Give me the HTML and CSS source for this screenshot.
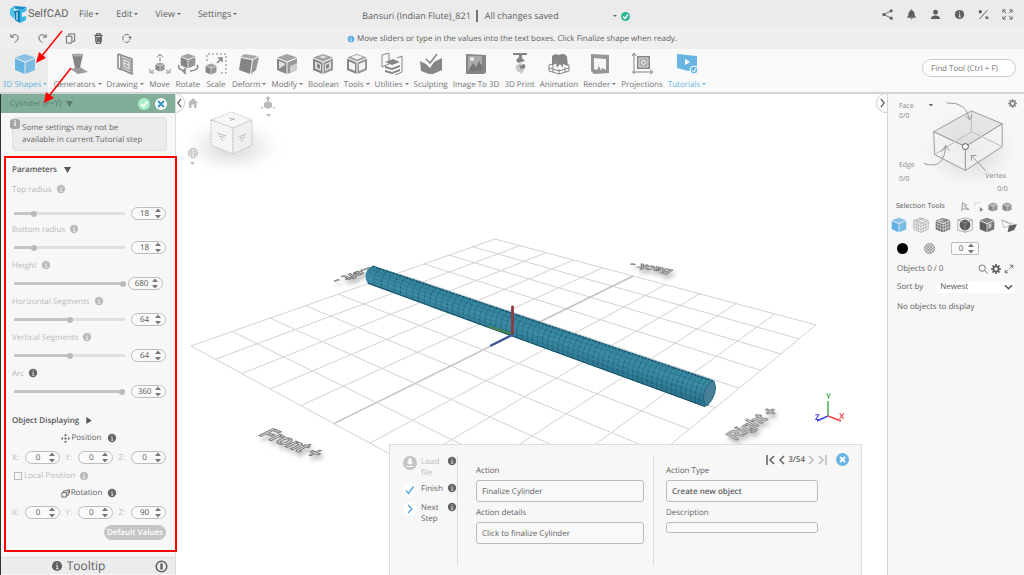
FILE: index.html
```html
<!DOCTYPE html>
<html lang="en">
<head>
<meta charset="utf-8">
<title>SelfCAD</title>
<link rel="stylesheet" href="styles.css">
</head>
<body>
<svg class="defs" aria-hidden="true">
  <symbol id="cube" viewBox="0 0 22 22"><path d="M11 1 21 4.500 11 8.500 1 4.500Z" opacity=".75"/><path d="M1 5.500 10.500 9.500V21L1 17Z"/><path d="M11.500 9.500 21 5.500V17L11.500 21Z" opacity=".85"/></symbol>
  <symbol id="info" viewBox="0 0 10 10"><circle cx="5" cy="5" r="4.200"/><path d="M5 2.300V3.300M4.300 4.500H5.200V7.300M4.200 7.300H6.200" stroke="#fff" stroke-width=".7" fill="none"/></symbol>
  <symbol id="spin" viewBox="0 0 6 11"><path d="M0 4 3 .5 6 4ZM0 7H6L3 10.500Z"/></symbol>
  <symbol id="down" viewBox="0 0 8 8"><path d="M0 1H8L4 8Z"/></symbol>
  <symbol id="chev" viewBox="0 0 8 12"><path d="M6 1 2 6 6 11" fill="none" stroke="currentColor" stroke-width="1.500"/></symbol>
  <symbol id="gear" viewBox="0 0 12 12"><path d="M6 0V12M0 6H12M1.800 1.800 10.200 10.200M10.200 1.800 1.800 10.200" stroke="currentColor" stroke-width="2"/><circle cx="6" cy="6" r="4.200"/><circle cx="6" cy="6" r="2" fill="#f7f7f7"/></symbol>
</svg>

<header class="top">
  <a class="brand" href="#"><svg width="19" height="19" viewBox="0 0 19 19"><path d="M1 4 5 1V14L1 10Z" fill="#4fc3e8"/><path d="M5 1 18 2 13 5 6 4Z" fill="#1690c8"/><path d="M5 6 11 5V18L6 15Z" fill="#087eb5"/><path d="M11 5 18 3 17 6 13 8V12L17 11V15L11 18Z" fill="#35b9e4"/><path d="M8 7V15" stroke="#fff" stroke-width="1"/></svg>SelfCAD</a>
  <nav class="menu"><button class="dd">File</button><button class="dd">Edit</button><button class="dd">View</button><button class="dd">Settings</button></nav>
  <div class="doc"><span class="doc-name">Bansuri (Indian Flute)_821</span><span>All changes saved</span></div>
  <div class="doc-state"><button class="dd" aria-label="Versions"></button><svg width="9" height="9" viewBox="0 0 9 9"><circle cx="4.500" cy="4.500" r="4.500" fill="#2bb795"/><path d="m2 4.500 2 2 3-4" fill="none" stroke="#fff" stroke-width="1.300"/></svg></div>
  <div class="top-icons">
    <button aria-label="Share"><svg viewBox="0 0 12 12"><path d="M10 2 2 6 10 10" fill="none" stroke="currentColor"/><circle cx="10" cy="2" r="1.700"/><circle cx="2" cy="6" r="1.700"/><circle cx="10" cy="10" r="1.700"/></svg></button>
    <button aria-label="Notifications"><svg viewBox="0 0 12 12"><path d="M6 0 7 1.500Q9.500 2.500 9.500 7L11 9.500H1L2.500 7Q2.500 2.500 5 1.500ZM4.500 10H7.500L6 11.500Z"/></svg></button>
    <button aria-label="Account"><svg viewBox="0 0 12 12"><circle cx="6" cy="3.500" r="2.700"/><path d="M1 11Q1 7 6 7T11 11Z"/></svg></button>
    <button aria-label="About"><svg viewBox="0 0 10 10"><use href="#info"/></svg></button>
    <button aria-label="Tools"><svg viewBox="0 0 12 12"><path d="M1.500 11 10.500 1" stroke="currentColor"/><circle cx="2.500" cy="3" r="1.800"/><path d="M8 8 11 8.500 11.500 11 8.500 10.500Z"/></svg></button>
    <button aria-label="Full screen"><svg viewBox="0 0 12 12"><path d="M1 4V1H4M8 1H11V4M11 8V11H8M4 11H1V8M1 1 4.500 4.500M11 1 7.500 4.500M11 11 7.500 7.500M1 11 4.500 7.500" fill="none" stroke="currentColor"/></svg></button>
  </div>
</header>

<div class="sub">
  <div class="history">
    <button aria-label="Undo"><svg viewBox="0 0 12 12"><path d="M2 1.500V4.500H5.500M2.500 4Q7-.5 10 4 11 8 6 10.500"/></svg></button>
    <button aria-label="Redo"><svg viewBox="0 0 12 12"><path d="M10 1.500V4.500H6.500M9.500 4Q5-.5 2 4 1 8 6 10.500"/></svg></button>
    <button aria-label="Copy"><svg viewBox="0 0 12 12"><path d="M1.500 3.500H7.500V11H1.500ZM4 3V1H10.500V9H8"/></svg></button>
    <button aria-label="Delete"><svg viewBox="0 0 12 12"><path d="M1.500 2.500H10.500M4 2V.8H8V2M3 3V9L4 11.500H8L9 9V3M4.700 4V10M6.200 4V10M7.700 4V10" stroke-width="1.300"/></svg></button>
    <button aria-label="Refresh"><svg viewBox="0 0 12 12"><path d="M8.500 2Q5 .5 2.500 3.500 1 7 3.500 9.500M5 10.500Q9 10.500 10 7V4M8.200 5.500 10 3.500 11.500 5.500" stroke-dasharray="5 1"/></svg></button>
  </div>
  <p class="hint"><svg class="blue" width="8" height="8"><use href="#info"/></svg>Move sliders or type in the values into the text boxes. Click Finalize shape when ready.</p>
</div>

<div class="ribbon">
  <button class="tool on"><svg viewBox="0 0 22 22"><use href="#cube"/></svg><span class="dd">3D Shapes</span></button>
  <button class="tool"><svg viewBox="0 0 22 22"><path d="M6 1H17L14 15H9Z"/><ellipse cx="11.500" cy="2" rx="5.500" ry="1.500" fill="#aaa"/><path d="M4 16 14 14 22 19 12 21Z" opacity=".8"/></svg><span class="dd">Generators</span></button>
  <button class="tool"><svg viewBox="0 0 22 22"><path d="M4 1V15L7 17M4 1 18 6V21L7 16V3" fill="none" stroke="currentColor" stroke-width="1.500"/><path d="M8 4 17 7V19L8 15Z" opacity=".7"/><path d="M10 7 15 9V16L10 13ZM10 10 15 12" fill="none" stroke="#eee"/></svg><span class="dd">Drawing</span></button>
  <button class="tool"><svg viewBox="0 0 22 22"><use href="#cube" x="6" y="9" width="10" height="10"/><path d="M11 8V1M8 4 11 1 14 4M5 17 1 20M1 16V20H5M17 17 21 20M21 16V20H17" fill="none" stroke="currentColor" stroke-dasharray="4 1"/></svg><span>Move</span></button>
  <button class="tool"><svg viewBox="0 0 22 22"><use href="#cube" x="3" y="0" width="16" height="16"/><path d="M2 12Q0 17 9 18M20 12Q23 17 13 18M9 15 6 18 9 21" fill="none" stroke="currentColor" stroke-width="1.500"/></svg><span>Rotate</span></button>
  <button class="tool"><svg viewBox="0 0 22 22"><use href="#cube" x="0" y="10" width="12" height="12"/><path d="M2 8V1H21V20H14" fill="none" stroke="currentColor" stroke-dasharray="2 2"/><path d="M12 10 17 5M13 5H17V9" fill="none" stroke="currentColor" stroke-width="1.500"/></svg><span>Scale</span></button>
  <button class="tool"><svg viewBox="0 0 22 22"><path d="M6 1 20 3 15 6 3 4Z" opacity=".7"/><path d="M3 5 14 7 12 21 1 17Z"/><path d="M15 7 21 4 18 17 13 21Z" opacity=".85"/></svg><span class="dd">Deform</span></button>
  <button class="tool"><svg viewBox="0 0 22 22"><use href="#cube"/><path d="M3 8 9 10.500V18L3 15.500Z" fill="#ddd"/><path d="M3 16 9 12V18Z"/><path d="M14 13 21 10V17L14 20Z" fill="#ccc"/></svg><span class="dd">Modify</span></button>
  <button class="tool"><svg viewBox="0 0 22 22"><use href="#cube"/><path d="M3 8.500 9 11V18L3 15.500ZM13 11 19 8.500V15.500L13 18ZM7 4 11 2.500 15 4 11 5.500Z" fill="#ddd"/><path d="M5 10.500 8 12V16L5 14.500ZM14 12 17 10.500V14.500L14 16Z"/></svg><span>Boolean</span></button>
  <button class="tool"><svg viewBox="0 0 22 22"><use href="#cube"/><path d="M3 8.500 9 11V18L3 15.500ZM13 11 19 8.500V15.500L13 18ZM5 4 11 2 17 4 11 6.500Z" fill="#f4f4f4"/></svg><span class="dd">Tools</span></button>
  <button class="tool"><svg viewBox="0 0 22 22"><path d="M1 2 8 0V11L1 14ZM16 5 21 3V19L14 22" fill="none" stroke="currentColor"/><path d="m4 9 8-3 7 3-8 3ZM4 13l7 2 8-3v2l-8 3-7-2ZM4 17l7 2 8-3v2l-8 3-7-2Z"/></svg><span class="dd">Utilities</span></button>
  <button class="tool"><svg viewBox="0 0 22 22"><path d="M0 8 6 11 10 15 14 9 22 5V17L13 21H9L1 18Z"/><path d="M17 1 10 10 6 6" fill="none" stroke="currentColor" stroke-width="1.500"/></svg><span>Sculpting</span></button>
  <button class="tool"><svg viewBox="0 0 22 22"><path d="M1 1 21 2V20L18 21H1Z"/><path d="M3 3H17V18H3Z" fill="#aaa"/><path d="M3 18 8 10 11 14 14 8 17 13V18Z" fill="#777"/><circle cx="7" cy="6" r="2" fill="#eee"/></svg><span>Image To 3D</span></button>
  <button class="tool"><svg viewBox="0 0 22 22"><path d="M4 0H18V2H13V5L16 8 9 10 7 7 10 4V2H4Z"/><path d="M6 13 12 10 17 13 13 21 8 18Z" opacity=".4"/><path d="M10 13 16 11V15L12 16Z"/></svg><span>3D Print</span></button>
  <button class="tool"><svg viewBox="0 0 22 22"><path d="M4 3Q7 0 11 2 17-1 19 4L20 13 15 11V15L12 11 9 15 8 10 4 13Z"/><path d="M1 12 11 9 21 12V18L11 21 1 18ZM1 15 11 18 21 15M5 13V19M11 16V21M17 14V19" fill="none" stroke="currentColor"/></svg><span>Animation</span></button>
  <button class="tool"><svg viewBox="0 0 22 22"><path d="M2 1 20 2V20L5 21 2 18Z" opacity=".85"/><path d="M5 5 17 6V17L13 15 12 18 10 13 8 17 5 16Z" fill="#f5f5f5"/></svg><span class="dd">Render</span></button>
  <button class="tool"><svg viewBox="0 0 22 22"><path d="M3 21V1M1 3 3 0 5 3M1 19H21M19 17 22 19 19 21" fill="none" stroke="currentColor"/><path d="M6 3H19V16H6Z"/><path d="M8 5H17V14H8Z" fill="#aaa" stroke="#ddd"/><circle cx="12.500" cy="9.500" r="2" fill="none" stroke="#fff"/></svg><span>Projections</span></button>
  <button class="tool tut"><svg viewBox="0 0 22 22"><path d="M1 1 21 3V16L12 18 1 15Z"/><path d="M9 6V12L14 9Z" fill="#fff"/><circle cx="18" cy="17" r="4" stroke="#fff"/><path d="m16 17 2 2 2-4" fill="none" stroke="#fff"/></svg><span class="dd">Tutorials</span></button>
  <input class="find" type="text" aria-label="Find tool" placeholder="Find Tool (Ctrl + F)">
</div>

<main class="work">
  <aside class="left">
    <div class="shape-bar"><span>Cylinder (P+Y)</span><svg width="7" height="7" viewBox="0 0 8 8"><use href="#down"/></svg>
      <button class="round ok" aria-label="Finalize"><svg viewBox="0 0 12 12"><path d="m3 6 2.500 2.500L9.500 3.500" stroke="#fff"/></svg></button>
      <button class="round no" aria-label="Cancel"><svg viewBox="0 0 12 12"><path d="m3 3 6 6M9 3 3 9" stroke="#3c94d0"/></svg></button></div>
    <p class="note"><span class="note-mark">i</span>Some settings may not be available in current Tutorial step</p>
    <section class="params">
      <h2>Parameters <svg width="7" height="7" viewBox="0 0 8 8"><use href="#down"/></svg></h2>
      <div class="param first"><label for="p1">Top radius</label><svg class="i"><use href="#info"/></svg><div class="ctl"><input id="p1" type="range" value="16" style="--v:16%"><span class="num"><input aria-label="Top radius value" value="18"><svg><use href="#spin"/></svg></span></div></div>
      <div class="param"><label for="p2">Bottom radius</label><svg class="i"><use href="#info"/></svg><div class="ctl"><input id="p2" type="range" value="16" style="--v:16%"><span class="num"><input aria-label="Bottom radius value" value="18"><svg><use href="#spin"/></svg></span></div></div>
      <div class="param"><label for="p3">Height</label><svg class="i"><use href="#info"/></svg><div class="ctl tight"><input id="p3" type="range" value="100" style="--v:100%"><span class="num"><input aria-label="Height value" value="680"><svg><use href="#spin"/></svg></span></div></div>
      <div class="param"><label for="p4">Horizontal Segments</label><svg class="i"><use href="#info"/></svg><div class="ctl"><input id="p4" type="range" value="50" style="--v:50%"><span class="num"><input aria-label="Horizontal segments value" value="64"><svg><use href="#spin"/></svg></span></div></div>
      <div class="param"><label for="p5">Vertical Segments</label><svg class="i"><use href="#info"/></svg><div class="ctl"><input id="p5" type="range" value="50" style="--v:50%"><span class="num"><input aria-label="Vertical segments value" value="64"><svg><use href="#spin"/></svg></span></div></div>
      <div class="param"><label for="p6">Arc</label><svg class="i dark"><use href="#info"/></svg><div class="ctl"><input id="p6" type="range" value="100" style="--v:100%"><span class="num"><input aria-label="Arc value" value="360"><svg><use href="#spin"/></svg></span></div></div>
    </section>
    <section class="place">
      <h2>Object Displaying <svg width="6" height="7" viewBox="0 0 6 8"><path d="M0 0V8L6 4Z"/></svg></h2>
      <h3><svg viewBox="0 0 10 10"><path d="M5 0 7 2H3ZM5 10 3 8H7ZM0 5 2 3V7ZM10 5 8 3V7ZM4 4H6V6H4Z"/></svg>Position<svg class="i dark"><use href="#info"/></svg></h3>
      <div class="xyz"><label for="px">X:</label><span class="num"><input id="px" value="0"><svg><use href="#spin"/></svg></span><label for="py">Y:</label><span class="num"><input id="py" value="0"><svg><use href="#spin"/></svg></span><label for="pz">Z:</label><span class="num"><input id="pz" value="0"><svg><use href="#spin"/></svg></span></div>
      <div class="local"><input id="loc" type="checkbox"><label for="loc">Local Position</label><svg class="i"><use href="#info"/></svg></div>
      <h3><svg viewBox="0 0 10 10"><path d="M1 4H6V9H1ZM3 4V2H8V7H6M7 1H9.500V5" fill="none" stroke="currentColor"/></svg>Rotation<svg class="i dark"><use href="#info"/></svg></h3>
      <div class="xyz"><label for="rx">X:</label><span class="num"><input id="rx" value="0"><svg><use href="#spin"/></svg></span><label for="ry">Y:</label><span class="num"><input id="ry" value="0"><svg><use href="#spin"/></svg></span><label for="rz">Z:</label><span class="num"><input id="rz" value="90"><svg><use href="#spin"/></svg></span></div>
      <button class="default">Default Values</button>
    </section>
    <footer class="tip"><span class="tip-name"><svg width="12" height="12" viewBox="0 0 10 10"><use href="#info"/></svg>Tooltip</span><button aria-label="Pin tooltip"><svg width="13" height="13" viewBox="0 0 13 13"><circle cx="6.500" cy="6.500" r="5.300" fill="none" stroke="currentColor" stroke-width="1.500"/><path d="M5.300 3.500H7.700V9.500H5.300Z"/></svg></button></footer>
  </aside>

  <section class="view">
    <svg id="scene" viewBox="176 94 711 481" preserveAspectRatio="xMidYMid slice">
      <defs>
        <radialGradient id="shade"><stop offset="0" stop-color="#aaa" stop-opacity=".55"/><stop offset=".5" stop-color="#ccc" stop-opacity=".3"/><stop offset="1" stop-color="#fff" stop-opacity="0"/></radialGradient>
        <linearGradient id="skin" gradientUnits="userSpaceOnUse" x1="545" y1="322" x2="536" y2="350"><stop offset="0" stop-color="#2f7f99"/><stop offset=".45" stop-color="#3c8ba5"/><stop offset="1" stop-color="#28718b"/></linearGradient>
        <filter id="drop" x="-30%" y="-30%" width="160%" height="180%"><feDropShadow dx="2" dy="4" stdDeviation="2" flood-color="#888" flood-opacity=".6"/></filter>
      </defs>
      <g id="grid" fill="none"></g>
      <g class="floor" filter="url(#drop)">
        <text transform="matrix(.95 .4 -1.200 .6 258 435)">Front +</text>
        <text transform="matrix(.75 -.5 .9 .5 736 441)">Right +</text>
        <text class="far" transform="matrix(-1.050 -.2 .7 -.5 674 270)">Back -</text>
        <text class="far" transform="matrix(-1.200 .4 -.7 -.45 370 267)">Left -</text>
      </g>
      <g id="tube"></g>
      <g stroke-linecap="round" stroke-width="2.200" fill="none"><path d="M512 334 490 327" stroke="#4b8150"/><path d="M512 335 491 345.500" stroke="#3d5595"/><path d="M512.500 333V307" stroke="#8f3943" stroke-width="2.800"/></g>
      <g stroke-width="1.500" fill="none"><path d="M828 416V401" stroke="#4fae55"/><path d="M828 416 841 421" stroke="#f24949"/><path d="M828 416 817 421" stroke="#4747ee"/></g>
      <g class="axis"><text x="826" y="399" fill="#4fae55">Y</text><text x="839" y="419" fill="#f24949">X</text><text x="815" y="420" fill="#4747ee">Z</text></g>
      <ellipse cx="232" cy="146" rx="55" ry="32" fill="url(#shade)"/>
      <g stroke="#bbb" stroke-dasharray="2 1" stroke-width=".8"><path d="M231.500 112 252 120 233 128 211 120Z" fill="#f7f7f7"/><path d="M211 120 233 128V154L211 145Z" fill="#f5f5f5"/><path d="M233 128 252 120V145L233 154Z" fill="#efefef"/></g>
      <path d="M217 133 226 136M219 136 225 138M221 138 223 141M239 137 246 134M240 139 245 137M242 140V142M229 118 235 120M230 121 234 118" fill="none" stroke="#bbb"/>
      <g fill="#bbb"><path d="M188 103 193 98 198 103H196.500V108H194V104.500H191.500V108H189V103Z"/><path d="M264 103 268 101 272 103V107L268 109 264 107ZM267 97H269V101H267ZM265 99 268 96 271 99ZM263 106V108L260 109ZM273 106V108L276 109ZM266 114H271L268.500 117ZM190 162H195L192.500 165Z"/></g>
      <g fill="none" stroke="#bbb" stroke-width=".9"><circle cx="193" cy="153" r="4.700"/><ellipse cx="193" cy="153" rx="2" ry="4.700"/><path d="M188 153H198M189 151 197 151M189 155H197"/></g>
    </svg>
    <button class="fold fold-l" aria-label="Collapse left panel"><svg viewBox="0 0 8 12"><use href="#chev"/></svg></button>
    <button class="fold fold-r" aria-label="Collapse right panel"><svg class="flip" viewBox="0 0 8 12"><use href="#chev"/></svg></button>

    <div class="tutorial">
      <div class="steps">
        <button class="step off"><svg class="disc" viewBox="0 0 14 14"><circle cx="7" cy="7" r="7" fill="#c4c4c4"/><path d="M5.500 2.500H8.500V6H10.500L7 9 3.500 6H5.500ZM3.500 10H10.500V11H3.500Z" fill="#fff"/></svg><span>Load file</span><svg class="i dark"><use href="#info"/></svg></button>
        <button class="step"><svg class="disc" viewBox="0 0 14 14"><circle cx="7" cy="7" r="7" fill="#fff"/><path d="m3 7.500 2.500 3L10.500 3.500" fill="none" stroke="#4ba3e0" stroke-width="1.300"/></svg><span>Finish</span><svg class="i dark"><use href="#info"/></svg></button>
        <button class="step"><svg class="disc" viewBox="0 0 14 14"><circle cx="7" cy="7" r="7" fill="#fff"/><path d="m5 3 4 4-4 4" fill="none" stroke="#4ba3e0" stroke-width="1.300"/></svg><span>Next Step</span><svg class="i dark"><use href="#info"/></svg></button>
      </div>
      <div class="fields">
        <label for="a1">Action</label><input id="a1" value="Finalize Cylinder" readonly>
        <label for="a2">Action details</label><input id="a2" value="Click to finalize Cylinder" readonly>
      </div>
      <div class="fields second">
        <label for="a3">Action Type</label><input id="a3" class="strong" value="Create new object" readonly>
        <label for="a4">Description</label><input id="a4" class="thin" value="" readonly>
      </div>
      <div class="pager">
        <button aria-label="First"><svg width="10" height="10" viewBox="0 0 10 10"><path d="M1 0V10M8 1 4 5 8 9"/></svg></button>
        <button aria-label="Previous"><svg width="6" height="10" viewBox="0 0 6 10"><path d="M5 1 1 5 5 9"/></svg></button>
        <span>3/54</span>
        <button class="off" aria-label="Next"><svg width="6" height="10" viewBox="0 0 6 10"><path d="M1 1 5 5 1 9"/></svg></button>
        <button class="off" aria-label="Last"><svg width="10" height="10" viewBox="0 0 10 10"><path d="M9 0V10M2 1 6 5 2 9"/></svg></button>
        <button class="close" aria-label="Close"><svg width="13" height="13" viewBox="0 0 13 13"><circle cx="6.500" cy="6.500" r="6.500" fill="#68b4e3" stroke="none"/><path d="m4 4 5 5M9 4 4 9" stroke="#fff" stroke-width="1.800"/></svg></button>
      </div>
    </div>
  </section>

  <aside class="right">
    <svg class="picker" viewBox="0 0 137 106">
      <ellipse cx="82" cy="55" rx="56" ry="48" fill="url(#shade)"/>
      <g stroke="#9a9a9a" stroke-width="1" fill="#e2e2e2" fill-opacity=".75"><path d="M84 17 115 30 78 53 46 38Z"/><path d="M46 38 78 53V77L47 61Z" fill="#f4f4f4"/><path d="M78 53 115 30V53L78 77Z" fill="#f4f4f4"/><path d="M84 17V38L115 53M84 38 47 61" fill="none" stroke="#bbb"/></g>
      <circle cx="78" cy="53" r="3" fill="#fff" stroke="#555"/>
      <g fill="none" stroke="#999"><path d="M59 9Q80 8 82 26M78 22 82 26 85 21M36 70Q57 77 58 52M54 58 58 52 62 57M99 78 84 62M84 67V62H89"/></g>
      <g class="ptext"><text x="11" y="14">Face</text><text x="11" y="24">0/0</text><text x="11" y="74">Edge</text><text x="11" y="88">0/0</text><text x="98" y="85">Vertex</text><text x="110" y="98">0/0</text></g>
      <path d="M41 10H45.500L43.200 12.500Z" fill="#666"/><svg x="121" y="5" width="9" height="9" viewBox="0 0 12 12" color="#888" fill="#888"><use href="#gear"/></svg>
    </svg>
    <div class="sel-head"><span>Selection Tools</span>
      <svg viewBox="0 0 12 12"><path d="M2 11 3 1 8 4 5 5 11 9 3 8" fill="none" stroke="currentColor"/></svg><svg viewBox="0 0 12 12"><path d="M1 1H9M1 1V9" fill="none" stroke="#bbb" stroke-dasharray="1 1"/><path d="M7 6 11 9 7 12Z"/></svg><svg viewBox="0 0 22 22"><use href="#cube"/></svg><svg viewBox="0 0 22 22"><use href="#cube"/></svg></div>
    <div class="modes">
      <button class="blue" aria-label="Object"><svg viewBox="0 0 22 22"><use href="#cube"/></svg></button>
      <button aria-label="Wire"><svg viewBox="0 0 22 22"><path d="M1 5 11 1 21 5 11 9ZM1 5V17L11 21 21 17V5M11 9V21M4.500 7V18M7.500 8V20M14.500 8V20M17.500 7V18M1 9 11 13 21 9M1 13 11 17 21 13M4 4 14 8M8 2 18 6M14 2 4 6" fill="none" stroke="#aaa"/></svg></button>
      <button aria-label="Polygon"><svg viewBox="0 0 22 22"><use href="#cube"/><path d="M4 6V18M7.500 8V20M14.500 8V20M18 6V18M1 9 11 13 21 9M1 13 11 17 21 13M4 3.500 14 7.500M14 2 4 6" fill="none" stroke="#ddd"/></svg></button>
      <button aria-label="Sphere"><svg viewBox="0 0 22 22"><circle cx="11" cy="11" r="7.500"/><path d="M1 4 11 1 21 4V18L11 21 1 18ZM11 8V21M1 4 11 8 21 4" fill="none" stroke="#999"/></svg></button>
      <button aria-label="Inner"><svg viewBox="0 0 22 22"><use href="#cube"/><path d="M13 10 17 8.500V14L13 16Z" fill="#ccc"/></svg></button>
      <button aria-label="Plane"><svg viewBox="0 0 22 22"><path d="M1 4 14 11 4 15ZM1 4 20 11" fill="none" stroke="#aaa"/><path d="M11 12 22 10 18 18 9 21Z"/></svg></button>
    </div>
    <div class="mats"><svg width="11" height="11" viewBox="0 0 12 12"><circle cx="6" cy="6" r="6" fill="#000"/></svg><svg width="11" height="11" viewBox="0 0 12 12"><circle cx="6" cy="6" r="5.500" fill="#ddd" stroke="#999"/><path d="M1 4 8 11M2 2 10 10M4 1 11 8M8 1 1 8M10 2 2 10M11 4 4 11" stroke="#888" stroke-width=".8"/></svg><span class="num square"><input aria-label="Softness" value="0"><svg><use href="#spin"/></svg></span></div>
    <div class="objs"><span>Objects 0 / 0</span><button aria-label="Search"><svg viewBox="0 0 12 12"><circle cx="5" cy="5" r="3.800" fill="none" stroke="currentColor"/><path d="m8 8 3.500 3.500" stroke="currentColor"/></svg></button><button aria-label="Settings"><svg viewBox="0 0 12 12"><use href="#gear"/></svg></button><button aria-label="Expand"><svg viewBox="0 0 12 12"><path d="M7 1.500H10.500V5M10.500 1.500 6.500 5.500M1.500 7V10.500H5M1.500 10.500 5 7" fill="none" stroke="currentColor"/></svg></button></div>
    <div class="sort"><label for="sort">Sort by</label><span class="pick"><select id="sort"><option>Newest</option></select><svg viewBox="0 0 10 8"><path d="m1 2 4 4 4-4" fill="none" stroke="currentColor" stroke-width="1.600"/></svg></span></div>
    <p class="empty">No objects to display</p>
  </aside>
</main>

<div class="mark-box"></div>
<svg class="marks" width="80" height="110" viewBox="0 0 80 110"><path d="M62 31 41 57M71 68 49 96" stroke="#f00" stroke-width="1.500"/><path d="M36 63 39 52 46 58ZM44 103 46 92 54 98Z" fill="#f00"/></svg>
<script src="scene.js"></script>
</body>
</html>
```
FILE: styles.css
```css
* { box-sizing: border-box; }
body { margin: 0; height: 100vh; display: grid; grid-template-rows: 28px 21px 45px minmax(0, 1fr); font: 8px/12px "Open Sans", "Noto Sans", sans-serif; color: #5f5f5f; background: #fff; overflow: hidden; text-rendering: geometricPrecision; }
button { border: 0; background: none; padding: 0; margin: 0; font: inherit; color: inherit; text-rendering: inherit; }
input, select { font: inherit; color: inherit; border: 0; background: none; padding: 0; margin: 0; min-width: 0; outline: 0; text-rendering: inherit; }
svg { fill: currentColor; flex: none; }
p, h2, h3 { margin: 0; }
.defs { position: absolute; width: 0; height: 0; }
.blue { color: #61b0e3; }
.dd::after { content: ""; display: inline-block; margin-left: 2px; vertical-align: 2px; border: 2px solid transparent; border-top-color: currentColor; border-bottom: 0; }

.top { background: #ebebeb; display: flex; align-items: center; font-size: 9px; padding: 0 11px 0 9px; }
.brand { display: flex; align-items: center; width: 70px; color: #666; font: 11px/16px Roboto, sans-serif; text-decoration: none; }
.menu { display: flex; gap: 17px; }
.doc { display: flex; margin: 4px 0 0 125px; }
.doc-name { border-right: 2px solid #777; padding-right: 5px; margin-right: 7px; }
.doc-state { display: flex; align-items: center; gap: 4px; margin: 4px 0 0 52px; }
.top-icons { display: flex; gap: 13px; margin-left: auto; }
.top-icons svg, .history svg { width: 11px; height: 11px; display: block; }

.sub { background: #efefef; display: flex; align-items: center; justify-content: center; position: relative; }
.history { position: absolute; left: 9px; top: 5px; display: flex; gap: 17px; }
.history svg { fill: none; stroke: currentColor; }
.hint { display: flex; align-items: center; gap: 2px; }

.ribbon { background: #f9f9f9; border-bottom: 2px solid #d5d5d5; display: flex; gap: 5px; padding-right: 8px; }
.tool { display: flex; flex-direction: column; align-items: center; gap: 4px; padding-top: 4px; color: #757575; white-space: nowrap; }
.tool svg { width: 22px; height: 22px; color: #858585; }
.tool.on { background: #ebebeb; padding: 4px 1px 0 2px; }
.tool.on, .tool.on svg, .tool.tut, .tool.tut svg { color: #68b4e3; }
.find { margin: 10px 0 0 auto; width: 94px; height: 18px; border: 1px solid #ccc; border-radius: 9px; background: #fff; padding: 0 8px; }
.find::placeholder { color: #777; opacity: 1; }

.work { display: grid; grid-template-columns: 176px minmax(0, 1fr) 137px; min-height: 0; }
.left { background: #f7f7f7; border-left: 1px solid #333; border-right: 1px solid #ddd; display: flex; flex-direction: column; }
.shape-bar { height: 19px; background: #80ae98; color: #5d7a6c; display: flex; align-items: center; padding: 0 8px 0 9px; gap: 5px; }
.round { width: 12px; height: 12px; border-radius: 50%; }
.round svg { display: block; fill: none; stroke-width: 2; }
.ok { margin-left: auto; background: #a5efc9; }
.no { background: #fff; }
.note { position: relative; margin: 4px 8px 0 11px; padding: 4px 16px 4px 9px; border-radius: 4px; border: 1px solid #e0e0e0; background: #ebebeb; color: #666; line-height: 12px; }
.note-mark { position: absolute; left: -3px; top: 1px; width: 10px; height: 10px; border-radius: 3px; background: #a5a5a5; color: #fff; font-weight: 700; line-height: 10px; text-align: center; }
.params, .place { padding: 0 9px 0 11px; }
h2 { font-size: 8px; font-weight: 600; line-height: 12px; color: #555; }
h2 svg { margin-left: 5px; vertical-align: -1px; }
.params h2 { margin-top: 13px; }
.param { height: 36px; color: #b9b9b9; padding-top: 3px; }
.param.first { height: 45px; padding-top: 8px; }
.param.first .ctl { margin-top: 11px; }
.i { width: 10px; height: 10px; color: #bbb; margin-left: 4px; vertical-align: -2px; }
.i.dark { color: #666; }
.ctl { display: flex; align-items: center; gap: 6px; height: 13px; margin-top: 5px; padding-left: 2px; }
.ctl input[type=range] { appearance: none; width: 112px; height: 7px; background: linear-gradient(to right, #c5c5c5 var(--v), #e0e0e0 var(--v)) center / 100% 3px no-repeat; }
.ctl input[type=range]::-webkit-slider-thumb { appearance: none; width: 6px; height: 6px; border-radius: 50%; background: #bbb; }
.tight { gap: 2px; }
.num { display: flex; align-items: center; width: 35px; height: 13px; border: 1px solid #bdbdbd; border-radius: 7px; background: #fafafa; color: #555; padding: 0 4px 0 2px; }
.num input { width: 100%; flex: 1; text-align: center; }
.num svg { width: 6px; height: 11px; color: #777; }
.place { display: flex; flex-direction: column; margin-top: 14px; }
h3 { display: flex; align-items: center; justify-content: center; gap: 1px; font-size: 8px; font-weight: 400; line-height: 12px; margin-top: 5px; }
h3 svg:first-child { width: 9px; height: 9px; }
.xyz { display: flex; align-items: center; justify-content: space-between; color: #bbb; margin-top: 7px; }
.local { display: flex; align-items: center; color: #bbb; margin-top: 6px; padding-left: 2px; }
.local input { appearance: none; width: 8px; height: 8px; border: 1px solid #bbb; margin-right: 2px; }
.default { align-self: flex-end; margin-top: 6px; height: 15px; padding: 0 3px; border-radius: 8px; background: #c5c5c5; color: #fff; font-weight: 600; }
.tip { margin-top: auto; height: 17px; margin-bottom: 1px; background: #ececec; border-top: 1px solid #ddd; display: flex; align-items: center; padding-right: 7px; font-size: 12px; line-height: 16px; }
.tip-name { flex: 1; display: flex; align-items: center; justify-content: center; gap: 4px; }
.tip button svg { display: block; }

.view { position: relative; background: #fff; overflow: hidden; }
#scene { position: absolute; inset: 0; width: 100%; height: 100%; }
.floor text { font: 700 17px "Liberation Sans", sans-serif; fill: #ddd; stroke: #777; stroke-width: 1px; }
.floor .far { font-size: 13px; }
.axis { font: 700 8px "Open Sans", sans-serif; }
.fold { position: absolute; top: -1px; width: 20px; height: 20px; border: 1px solid #ccc; border-radius: 50%; background: #fff; }
.fold svg { width: 7px; height: 10px; display: block; }
.fold-l { left: -11px; padding-left: 10px; }
.fold-r { right: -9px; padding-left: 2px; }
.flip { transform: rotate(180deg); }

.tutorial { position: absolute; left: 213px; right: 25px; bottom: 0; height: 131px; background: #f7f7f7; border: 1px solid #ddd; border-bottom: 0; display: grid; grid-template-columns: 68px 196px minmax(0, 1fr); padding-top: 11px; }
.steps { height: 110px; border-right: 1px solid #ddd; padding-left: 13px; }
.step { display: grid; grid-template-columns: 14px 22px 10px; gap: 4px; align-items: start; text-align: left; line-height: 11px; margin-bottom: 5px; }
.step.off span, .off { color: #bbb; }
.disc { width: 14px; height: 14px; }
.step .i { margin: 0; }
.fields { padding: 9px 9px 0 18px; display: flex; flex-direction: column; height: 110px; border-right: 1px solid #ddd; }
.fields input { height: 22px; border: 1px solid #bbb; border-radius: 3px; background: #f9f9f9; padding: 0 5px; margin: 3px 0 5px; }
.fields.second { padding: 9px 43px 0 12px; border: 0; }
.fields .strong { font-weight: 600; }
.fields .thin { height: 11px; }
.pager { position: absolute; right: 12px; top: 8px; display: flex; align-items: center; gap: 3px; font-weight: 600; }
.pager svg { fill: none; stroke: currentColor; stroke-width: 1.500; display: block; }
.pager .close { margin-left: 6px; }

.right { background: #f7f7f7; border-left: 1px solid #d5d5d5; display: flex; flex-direction: column; overflow: hidden; }
.picker { width: 100%; }
.ptext { font-size: 7px; fill: #888; }
.sel-head { display: flex; align-items: center; gap: 4px; padding: 2px 12px 0 8px; font-size: 7px; color: #555; }
.sel-head span { flex: 1; }
.sel-head svg { width: 10px; height: 10px; color: #888; }
.modes { display: flex; justify-content: space-between; padding: 4px 7px 0 3px; }
.modes svg { width: 16px; height: 16px; display: block; }
.mats { display: flex; align-items: center; gap: 16px; padding: 9px 0 0 9px; }
.square { width: 28px; border-radius: 2px; }
.objs { display: flex; align-items: center; gap: 3px; padding: 8px 10px 0 9px; }
.objs span { flex: 1; }
.objs svg { width: 10px; height: 10px; display: block; }
.sort { display: flex; align-items: center; gap: 14px; padding: 6px 9px 0 9px; }
.pick { position: relative; flex: 1; background: #fff; height: 11px; display: flex; align-items: center; color: #555; }
.pick select { appearance: none; width: 100%; padding-left: 3px; }
.pick svg { position: absolute; right: 2px; width: 9px; height: 8px; }
.empty { padding: 8px 9px; }

.mark-box { position: absolute; left: 4px; top: 156px; width: 173px; height: 396px; border: 2px solid #f00; }
.marks { position: absolute; left: 0; top: 0; pointer-events: none; }
```
FILE: scene.js
```js
// Draws the perspective floor grid and the segmented cylinder.
const NS = "http://www.w3.org/2000/svg";
const add = (parent, d, attrs) => {
  const p = document.createElementNS(NS, "path");
  p.setAttribute("d", d);
  for (const k in attrs) p.setAttribute(k, attrs[k]);
  parent.appendChild(p);
};

const [x0, y0, x1, y1, x2, y2, x3, y3] = [495, 239, 816, 325, 552, 542, 191, 346];
const dx1 = x1 - x2, dx2 = x3 - x2, sx = x0 - x1 + x2 - x3;
const dy1 = y1 - y2, dy2 = y3 - y2, sy = y0 - y1 + y2 - y3;
const det = dx1 * dy2 - dx2 * dy1;
const g = (sx * dy2 - dx2 * sy) / det, h = (dx1 * sy - sx * dy1) / det;
const project = (u, v) => {
  const w = g * u + h * v + 1;
  return [((x1 - x0 + g * x1) * u + (x3 - x0 + h * x3) * v + x0) / w,
          ((y1 - y0 + g * y1) * u + (y3 - y0 + h * y3) * v + y0) / w];
};
const grid = document.getElementById("grid");
for (let i = 0; i <= 10; i++) {
  const t = i / 10;
  add(grid, `M${project(t, 0)}L${project(t, 1)}`, { stroke: i === 5 ? "#c2c2c2" : "#d2d2d2", "stroke-width": i === 5 ? 1.5 : 1 });
  add(grid, `M${project(0, t)}L${project(1, t)}`, { stroke: "#d2d2d2" });
}

const tube = document.getElementById("tube");
add(tube, "M373 265.500 713 380Q719 393 705 407L368 284Q361 272 373 265.500Z", { fill: "url(#skin)" });
const section = t => {
  const ax = 373 + 340 * t, ay = 265.5 + 114.5 * t, bx = 367 + 338 * t, by = 283.5 + 123.5 * t;
  return `M${ax} ${ay}Q${(ax + bx) / 2 - 6} ${(ay + by) / 2 - 3} ${bx} ${by}`;
};
for (let i = 1; i < 64; i++) {
  const t = Math.pow(i / 64, 0.9);
  add(tube, section(t), { fill: "none", stroke: "#174e63", "stroke-width": 0.8, "stroke-dasharray": `${2 + i % 3} 1`, opacity: 0.8 });
}
for (let i = 1; i < 10; i++) {
  const s = i / 10;
  add(tube, `M${371 - 5 * s} ${266 + 17 * s}L${711 - 8 * s} ${381 + 26 * s}`, { stroke: i % 2 ? "#4f9cb4" : "#1d5d74", "stroke-width": 0.5, "stroke-dasharray": "2 1", opacity: 0.6 });
}
add(tube, "M373 266.500 713 381", { stroke: "#143f50", "stroke-width": 1.2, "stroke-dasharray": "1.5 2" });
add(tube, "M368 283 705 406.500", { stroke: "#1a5266", "stroke-width": 1 });
add(tube, "M714 381Q719 393 707 406 701 400 705 390 708 382 714 381Z", { fill: "#487f99", stroke: "#286781", "stroke-width": 1 });
```
